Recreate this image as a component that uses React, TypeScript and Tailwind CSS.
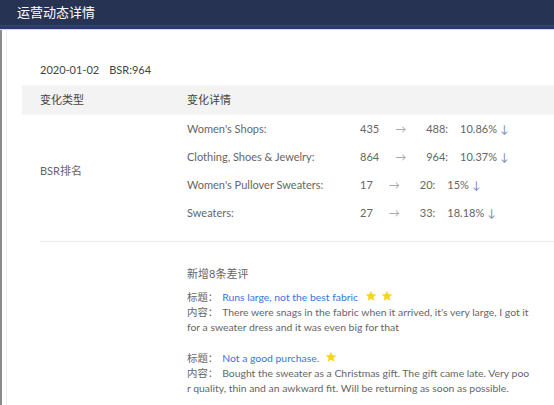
import React from "react";

const rows = [
  { name: "Women's Shops:", a: "435", b: "488", pct: "10.86%" },
  { name: "Clothing, Shoes & Jewelry:", a: "864", b: "964", pct: "10.37%" },
  { name: "Women's Pullover Sweaters:", a: "17", b: "20", pct: "15%" },
  { name: "Sweaters:", a: "27", b: "33", pct: "18.18%" },
];

function Star() {
  return (
    <svg width="12" height="12" viewBox="0 0 24 24" className="inline-block align-[-1px]">
      <path d="M12 1.5l3.1 7.1 7.6.6-5.8 5 1.8 7.5L12 17.7l-6.7 4 1.8-7.5-5.8-5 7.6-.6z" fill="#f7d51d" />
    </svg>
  );
}

export default function App() {
  return (
    <div className="w-[554px] h-[405px] overflow-hidden bg-white text-[11px] text-[#666]" style={{ fontFamily: 'Lato, "Noto Sans CJK SC", sans-serif' }}>
      <div className="h-[25px] bg-[#263352] flex items-center pl-[17px] text-white text-[13px]">
        运营动态详情
      </div>
      <div className="h-px bg-[#2f4f5a]" />
      <div className="h-[3px] bg-[#2b3a66]" />
      <div className="h-px bg-[#d8d8d8]" />
      <div className="flex h-[376px]">
        <div className="w-[2px] bg-[#8c8c8c]" />
        <div className="w-[4px]" />
        <div className="w-px bg-[#ececec]" />
        <div className="flex-1 pl-[15px]">
          <div className="h-[40px]" />
          <div className="h-[24px] flex items-center pl-[18px] text-[#444] -mt-[12px] mb-[3px]">
            <span>2020-01-02</span>
            <span className="ml-[10px]">BSR:964</span>
          </div>
          <div className="h-[29px] bg-[#f3f3f3] flex items-center text-[#444] border-t border-[#f8f8f8]">
            <div className="w-[165px] pl-[18px]">变化类型</div>
            <div>变化详情</div>
          </div>
          <div className="flex items-start border-t border-[#f7f7f7] h-[127px]">
            <div className="w-[165px] h-[112px] pl-[18px] flex items-center">BSR排名</div>
            <div className="flex flex-col">
              {rows.map((r) => (
                <div key={r.name} className="h-[28px] flex items-center">
                  <span className="w-[173px]">{r.name}</span>
                  <span>{r.a}</span>
                  <span className="ml-[16px] text-[#aaa]">→</span>
                  <span className="ml-[20px]">{r.b}:</span>
                  <span className="ml-[12px]">{r.pct}</span>
                  <span className="ml-[3px] text-[#7a8aa8]">↓</span>
                </div>
              ))}
            </div>
          </div>
          <div className="ml-[18px] h-px bg-[#ececec]" />
          <div className="pl-[165px] pt-[24px] w-[510px]">
            <div className="leading-[15px]">新增8条差评</div>
            <div className="mt-[9px] leading-[15px] break-all text-[10.4px]">
              <div>
                标题：<span className="ml-[4px] text-[#3b74dc]">Runs large, not the best fabric</span>
                <span className="ml-[7px]"><Star /></span>
                <span className="ml-[4px]"><Star /></span>
              </div>
              <div>
                内容：<span className="ml-[4px]">There were snags in the fabric when it arrived, it's very large, I got it for a sweater dress and it was even big for that</span>
              </div>
            </div>
            <div className="mt-[16px] leading-[15px] break-all text-[10.4px]">
              <div>
                标题：<span className="ml-[4px] text-[#3b74dc]">Not a good purchase.</span>
                <span className="ml-[6px]"><Star /></span>
              </div>
              <div>
                内容：<span className="ml-[4px]">Bought the sweater as a Christmas gift. The gift came late. Very poor quality, thin and an awkward fit. Will be returning as soon as possible.</span>
              </div>
            </div>
          </div>
        </div>
      </div>
    </div>
  );
}
